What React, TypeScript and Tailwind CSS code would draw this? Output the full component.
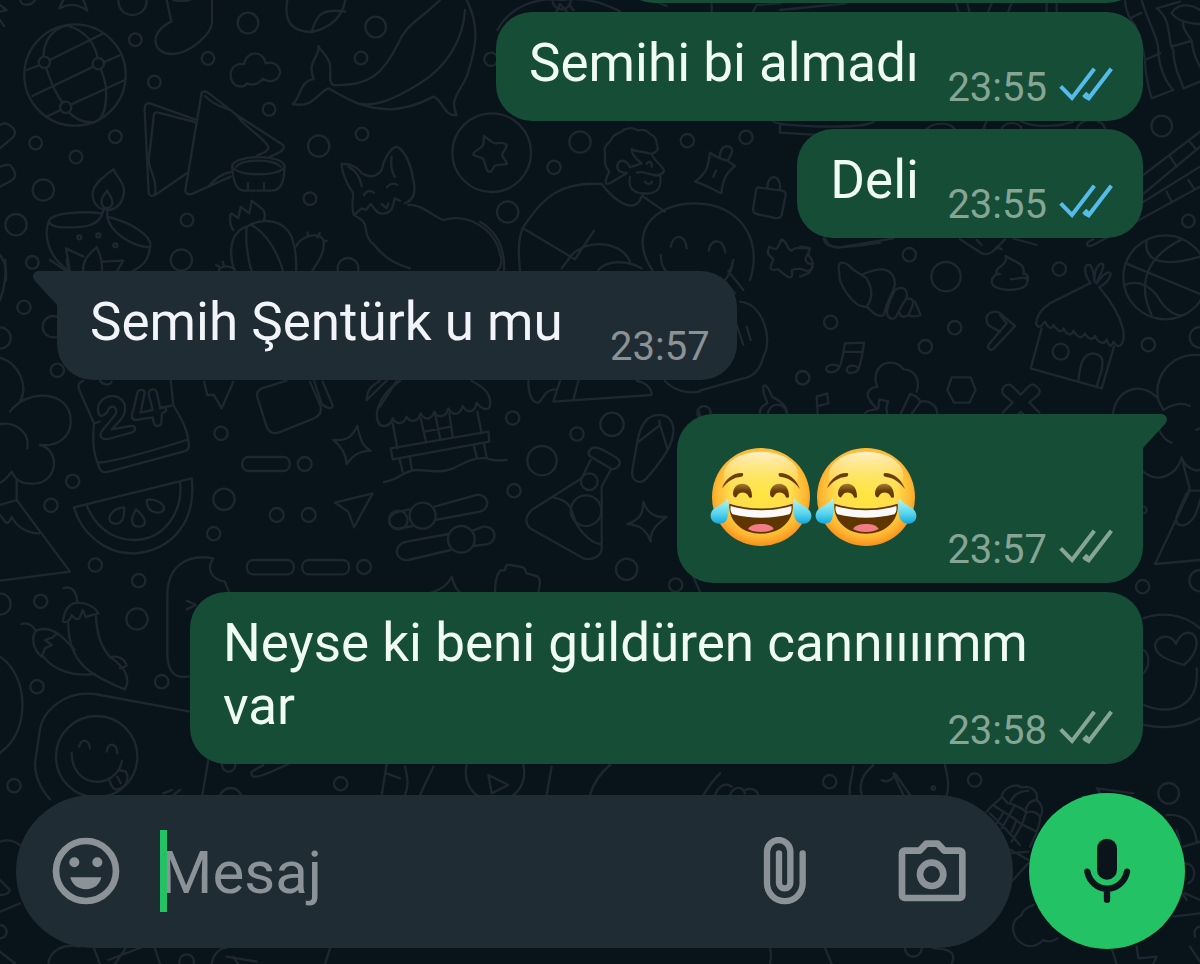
import React, { useState } from "react";

interface Message {
  id: number;
  text?: string;
  emojis?: number;
  time: string;
  mine: boolean;
  read?: boolean;
  tail?: boolean;
  space: string;
}

const messages: Message[] = [
  { id: 1, text: "Semihi bi almadı", time: "23:55", mine: true, read: true, space: "mt-[9px]" },
  { id: 2, text: "Deli", time: "23:55", mine: true, read: true, space: "mt-2" },
  { id: 3, text: "Semih Şentürk u mu", time: "23:57", mine: false, tail: true, space: "mt-[33px]" },
  { id: 4, emojis: 2, time: "23:57", mine: true, tail: true, space: "mt-[34px]" },
  { id: 5, text: "Neyse ki beni güldüren cannıııımm var", time: "23:58", mine: true, space: "mt-[9px]" },
];

// [cx, cy, r] in the coordinates of the tile they belong to
type Dot = [number, number, number];

interface Tile {
  at: string;
  dots: Dot[];
  lines: string[];
}

// wallpaper doodles, every tile is drawn at three times its size
const tiles: Tile[] = [
  {
    at: "translate(0 0) scale(0.33333)",
    dots: [
      [225, 225, 152], [133, 187, 17], [295, 191, 17], [197, 322, 17],
      [406, 119, 19], [624, 175, 19], [463, 246, 19], [744, 69, 31], [1127, 81, 31],
      [1083, 174, 19], [807, 328, 19], [956, 438, 32], [1086, 402, 19], [107, 429, 19],
      [346, 410, 19], [228, 471, 19], [130, 570, 32], [48, 674, 32], [97, 787, 19],
      [561, 660, 19], [544, 780, 32], [930, 596, 19], [1044, 805, 31],
      [238, 712, 6], [295, 706, 6], [346, 736, 6],
    ],
    lines: [
      "M80 210L117 196M149 180L310 100M97 288L280 200M310 187L362 165M140 350L182 330M212 314L375 240",
      "M130 170C132 130 150 90 200 76C255 90 285 130 293 175M138 203C150 240 165 280 188 308M207 337C230 360 255 370 285 366C320 350 320 290 318 262C314 240 308 220 302 207",
      "M60 0C65 18 90 20 105 0M190 0L178 25C205 10 235 12 262 32L250 0M0 15L20 30L0 35M0 60L12 78",
      "M355 0C355 60 440 60 440 0M500 0L514 65C440 100 460 165 520 162C570 160 638 100 636 65V0M520 0C540 4 555 4 570 0",
      "M862 0C850 70 880 95 935 96C985 85 1025 60 1036 0M935 96C950 40 970 25 1036 35",
      "M732 192C740 150 790 150 797 190C830 180 845 210 838 225C828 250 800 245 788 236C770 258 750 255 742 250C725 268 690 260 692 220C695 200 710 190 732 192Z",
      "M1320 0C1260 60 1220 70 1195 130C1150 220 1110 260 1000 255C980 245 1000 200 985 180C975 160 960 150 955 138C960 165 930 185 935 210C935 230 945 235 940 238C900 240 900 300 878 312C940 325 950 280 985 265C1040 295 1080 325 1170 328C1240 325 1280 300 1300 290C1330 300 1330 350 1370 345C1350 300 1370 290 1400 230C1430 140 1440 80 1400 0M1080 312C1130 318 1180 300 1260 250C1340 200 1390 120 1395 30",
      "M585 358L450 310C436 308 434 318 434 330L446 580C450 590 458 590 470 582L560 520M585 366L475 338C462 334 460 345 460 360L446 480C450 520 470 530 466 580",
      "M605 278L556 570C556 582 566 586 580 580L625 560L692 530M605 278C615 268 625 280 635 286L710 345L845 432C856 440 852 448 840 456L810 470M615 288C640 315 670 322 690 330M710 345C730 380 790 410 805 440C808 452 790 460 772 466M625 560C650 530 670 520 692 516",
      "M696 498C700 465 845 460 854 498C850 530 705 532 696 498ZM696 498C700 540 705 572 735 572H815C845 570 852 545 854 498M708 500C730 476 820 476 842 500M744 550V565M792 550V565",
      "M340 508C310 530 276 555 278 585C280 615 300 630 322 630C350 630 372 605 372 570C370 545 350 530 340 508ZM322 572C305 590 300 605 308 618C315 628 330 625 336 615C342 600 330 590 322 572Z",
      "M310 632C300 680 250 684 190 682C155 680 145 670 148 660C160 640 240 632 305 640M148 660C130 700 140 770 210 815M322 650C330 700 400 740 450 742C460 710 400 670 322 650ZM450 742C445 790 420 800 395 815M322 632V655",
      "M210 815L198 745L250 770M250 815C245 780 270 760 290 742C305 770 308 800 305 815M308 785L370 782L350 815",
      "M740 680C680 700 690 780 705 815M740 680C735 730 745 780 755 815M755 675C800 700 830 750 850 815M740 680C790 650 850 660 875 710C888 750 890 790 888 815M700 690C685 670 690 640 695 640L715 655L722 620L748 640L755 602L790 630C800 650 790 665 785 665",
      "M888 740C900 705 970 690 972 730C970 770 950 790 935 815M925 710L922 697M952 712L960 698M970 725L980 722M705 810C690 795 660 795 655 815M648 795L658 800M668 785L672 798",
      "M1060 580C1035 545 1025 510 1025 492C1060 490 1080 510 1085 520C1110 535 1130 530 1145 510C1150 480 1170 445 1190 440C1215 450 1235 500 1240 540C1250 580 1240 600 1215 610M1085 558C1080 530 1065 510 1045 500M1175 470C1170 500 1178 520 1184 530M1060 580C1055 620 1060 640 1062 645L1085 625L1098 630L1112 612L1128 632C1140 645 1170 645 1178 620L1184 595L1200 602M1092 585C1098 572 1115 570 1122 578M1160 562C1168 550 1185 548 1192 555M1145 612L1160 625L1165 610",
      "M1062 645C1085 660 1095 660 1098 690C1100 710 1105 720 1120 732C1150 770 1180 790 1230 805M1225 615C1260 610 1300 650 1330 660C1400 640 1480 680 1500 760C1510 790 1500 805 1490 815",
      "M0 375C15 365 25 370 40 385C48 395 45 410 35 415L0 445M0 500C25 490 35 490 45 520C48 535 40 540 0 560M0 765C15 785 20 810 18 840",
    ],
  },
  {
    at: "translate(480 0) scale(0.33333)",
    dots: [
      [35, 458, 118], [300, 426, 32], [222, 502, 20], [622, 422, 20], [798, 412, 20],
      [83, 636, 32], [33, 178, 20], [245, 0, 28],
    ],
    lines: [
      "M52 90C90 20 170 -10 245 0C320 -10 370 10 420 34M230 34L240 12L260 34M280 30L268 14",
      "M12 408C30 420 40 432 48 430C60 428 75 428 80 435C78 450 66 458 66 465C72 480 85 488 80 492C65 495 48 492 42 500C36 515 30 520 22 512C15 500 14 480 8 475L-20 465C-25 455 5 445 10 435Z",
      "M388 515C365 490 380 470 374 455C370 430 395 430 398 410C415 395 425 400 430 390C450 380 465 385 475 392C490 385 505 395 510 402C530 410 530 425 530 432C540 450 525 458 515 462C490 455 470 455 455 448C455 470 475 480 485 490L450 502C440 480 420 475 412 495C410 510 420 520 440 518",
      "M388 515C375 540 370 560 392 548L440 520M365 552C400 600 440 620 460 616C485 610 480 590 490 582M450 530C440 580 480 582 510 580C540 575 545 555 540 525C515 530 490 510 470 518M515 462C520 480 555 505 552 512C550 522 530 528 520 526M495 545C500 555 515 552 516 545M500 492C505 480 518 485 515 500",
      "M365 552C240 545 190 590 128 684L285 778L342 692M128 684C110 730 118 780 120 815M490 590L555 635M245 805L275 765C330 710 430 730 450 785M355 810C380 780 440 780 485 805",
      "M520 815C440 700 520 610 645 610C780 610 850 720 810 840M572 740C580 700 615 700 620 745M686 752C692 712 732 715 736 758M542 765C545 790 545 800 560 815M760 780C758 800 750 810 745 815M0 665C60 700 75 760 72 815",
      "M720 470C720 440 740 432 755 445C762 455 745 475 745 480M690 458C715 475 725 478 742 482L765 498C740 520 730 530 724 580C700 570 680 555 645 545C680 520 685 500 690 458ZM708 512L700 530",
      "M834 562L905 572C918 575 918 580 916 590L905 645C900 655 895 655 885 654L830 642C820 640 818 632 820 622L828 572C830 565 830 562 834 562ZM862 562C862 520 905 520 900 570",
      "M905 718C890 745 895 755 868 740C855 770 875 765 880 780C865 810 870 812 895 808M905 718C925 725 915 745 935 752C945 740 960 745 990 745C985 770 965 775 985 790C1005 790 1000 815 975 812C970 805 950 805 935 810C940 840 930 840 895 808",
      "M880 365C890 380 1170 390 1185 362M900 375L900 398L1100 410M1030 715C1040 745 1060 750 1200 728M540 10L560 18M695 10V34M820 34L830 15L900 10M900 30L1100 10",
    ],
  },
  {
    at: "translate(800 0) scale(0.33333)",
    dots: [
      [1085, 378, 31], [1165, 663, 19], [328, 764, 20], [438, 830, 44], [778, 807, 20],
      [1096, 832, 126], [92, 967, 20], [464, 983, 20], [376, 1040, 20], [1045, 1034, 20],
      [8, 1133, 20], [1200, 1012, 31], [782, 1055, 24],
    ],
    lines: [
      "M975 0C975 30 990 60 1005 75C1020 120 1030 140 1035 180M990 55L1025 38M1025 0C1040 60 1080 120 1075 160C1080 210 1100 250 1120 270L1055 295C1040 250 1035 200 1035 180L1080 160M1070 25C1120 60 1100 130 1120 150C1120 210 1145 240 1150 265L1200 245M1070 25L1140 5M1115 40C1130 10 1170 10 1200 30M1115 40C1130 60 1160 70 1200 72M1150 65C1145 90 1170 110 1175 122M1115 140L1175 122C1180 170 1195 190 1200 200",
      "M380 388C400 365 450 365 465 388M550 388L560 362M605 388C610 365 660 362 665 388M660 362C700 385 780 380 820 365M830 388C840 350 910 350 915 388M465 0L475 34M500 0L508 34M565 34L575 10M625 34L635 8M740 10V34M770 10V34",
      "M1200 395L1030 525M1200 440L1020 590M1165 420L1190 450M1110 470L1130 500M1200 500L1015 615M1200 560L880 735C860 745 850 730 880 718M1100 575L1115 605M1165 540L1182 565",
      "M118 820C110 780 130 785 145 795C160 815 180 818 200 835C220 870 215 900 200 920C160 925 115 850 118 820ZM190 822C240 800 280 800 285 850C285 870 260 900 252 945C225 955 215 930 200 920M285 870C310 855 325 870 320 895C300 920 290 955 282 955C265 960 258 940 262 930C265 905 275 890 285 870M320 895C345 895 345 905 325 945C310 955 300 950 300 940M345 905L362 945C350 950 335 950 325 945",
      "M617 768C625 800 580 800 590 822C560 845 580 865 610 868C640 872 680 868 682 845C682 825 665 835 632 838M682 845C690 825 675 820 670 822C680 790 640 785 617 768M590 822H600",
      "M872 850C850 820 850 790 870 795C885 810 880 840 884 846M884 846C880 810 900 780 910 795C912 810 895 830 890 850C910 820 930 810 932 822C930 840 910 855 898 862",
      "M870 850L750 910C720 930 710 950 708 970C715 990 728 975 735 965C745 985 755 990 760 975C775 995 785 1000 790 985C800 1005 815 1010 820 992C835 1015 845 1018 855 1000C865 1020 880 1020 885 1008C895 1030 915 1035 920 1018C930 1045 935 1040 940 1025C955 1050 975 1040 970 990C960 950 930 900 898 862M725 985L692 1105L905 1165L942 1040M835 1145C840 1090 850 1060 880 1060C915 1065 908 1090 905 1110L890 1160",
      "M978 790L1200 882M1040 722C1030 790 1100 800 1200 770M1145 718C1040 770 1010 850 1055 945M975 855C1010 840 1040 850 1070 885C1100 940 1140 955 1160 940",
      "M135 1030L192 1028C188 1060 182 1090 175 1108M135 1030C130 1060 125 1090 118 1102M130 1055L188 1056M118 1102C110 1120 82 1120 78 1108C80 1095 100 1088 118 1100M175 1108C165 1122 142 1122 140 1110C142 1095 165 1092 175 1105",
      "M560 962C555 935 590 930 600 940L645 978L582 1045C575 1055 560 1045 565 1035L620 970L600 945M560 962C560 980 585 985 600 995",
      "M455 1132H512L527 1170L508 1208H462L442 1170Z",
      "M232 1160C215 1120 240 1085 275 1088C295 1090 305 1100 310 1108C350 1110 360 1145 350 1175M232 1160C200 1165 195 1190 215 1205M1200 1065C1110 1060 1060 1130 1075 1200C1085 1220 1090 1230 1090 1228M938 1245C950 1165 1020 1145 1068 1190",
      "M0 740C30 740 30 745 25 765C40 780 45 800 25 820L0 830M75 715C85 740 100 745 120 742L280 715M480 718L545 760C570 768 580 755 615 718M530 720L545 735M590 740L605 748M640 715L710 735",
    ],
  },
  {
    at: "translate(700 230) scale(0.33333)",
    dots: [[308, 443, 20], [12, 548, 20], [232, 552, 28]],
    lines: [
      "M97 97C97 120 88 132 75 150M90 130L130 180M75 155L105 190M120 215C190 220 220 330 190 380C180 420 160 440 130 445L0 482M110 285L130 345M140 290L152 330",
      "M190 470C196 460 206 472 216 500C240 512 262 530 262 552M190 470C186 490 200 508 202 520C184 528 178 540 180 552",
      "M353 552L350 500L382 490L385 520L355 528",
      "M510 515L530 535M495 552C500 535 520 545 535 535L538 508L565 514C555 530 560 540 562 552M602 552L630 492C645 495 658 505 660 515M635 552L662 515C690 508 712 530 712 552",
      "M912 495C905 488 905 480 912 470C920 462 932 462 938 470L962 494L988 468C996 460 1004 464 1010 470C1020 478 1022 486 1015 494L988 517L1018 548M912 495L938 517L908 548M955 552L963 546L970 552",
    ],
  },
  {
    at: "translate(0 260) scale(0.33333)",
    dots: [
      [72, 142, 20], [172, 331, 20], [0, 234, 32], [663, 520, 20], [914, 612, 21],
      [672, 718, 32], [641, 821, 20], [830, 765, 21], [926, 765, 21], [1092, 921, 21],
      [218, 664, 20], [153, 736, 20], [286, 915, 20], [416, 962, 20], [1195, 780, 28],
      [160, 200, 32],
    ],
    lines: [
      "M0 293C60 310 85 380 60 425M30 455C80 385 210 390 212 480C215 540 160 560 120 555C180 570 175 660 110 670C70 675 45 660 35 635C20 655 10 665 0 668M0 492C50 485 90 520 82 565M50 660V720L0 735M50 720L210 935L0 962M0 765L18 788C25 790 30 785 35 770C50 800 80 820 118 820",
      "M250 362C230 370 235 385 240 395L282 490C275 560 285 590 295 615C300 635 310 640 330 634L550 575C570 570 568 560 565 540C560 500 540 470 520 435L512 362M282 490L300 485M480 445L520 435M295 608C350 605 480 565 560 540M300 362C310 375 330 378 335 365",
      "M296 462C285 420 325 400 355 412C385 428 378 462 358 484L335 508L392 498C408 496 410 512 396 517L325 537C300 540 296 525 308 510L345 465C358 445 335 430 325 448C322 462 302 475 296 462Z",
      "M412 398C416 386 434 388 434 398L422 458L458 450L446 402C446 386 466 384 470 396L480 442C502 438 504 454 486 460L484 488C482 502 464 500 462 490L458 472L408 480C392 480 394 466 400 450Z",
      "M612 365L622 405H642L665 445L700 365M785 385L860 362M785 385C770 395 770 400 772 412L800 500C808 518 820 522 835 518L935 478C960 470 965 455 962 440L930 365M942 362L965 430C975 445 1000 450 998 435L968 365",
      "M746 591H850C876 591 876 633 850 633H746C720 633 720 591 746 591ZM760 900H862C888 900 888 943 862 943H760C734 943 734 900 760 900ZM926 900H1028C1054 900 1054 943 1028 943H926C900 943 900 900 926 900Z",
      "M1072 498C1082 545 1090 560 1112 572C1070 575 1055 590 1040 612C1038 580 1020 555 1000 540C1050 545 1060 520 1072 498ZM1118 700L1062 802L1045 755L1005 728Z",
      "M222 742L575 655C590 780 520 870 405 880C310 885 240 810 222 742ZM260 735C280 790 330 840 400 840C490 840 550 760 540 665",
      "M372 742C330 745 320 780 335 788C360 800 375 780 372 742ZM408 748C392 775 390 798 415 800C440 800 445 780 408 748ZM440 720C455 715 490 725 492 745C490 765 440 765 440 720Z",
      "M640 895C560 880 500 920 502 1010V1190C505 1230 520 1255 560 1250H640M640 895C615 930 640 960 675 965C680 985 690 995 690 1005M560 1022L588 1035L560 1048",
      "M1100 420C1100 380 1130 370 1140 362M1100 420L1160 362M1200 362C1130 410 1120 470 1140 495C1160 505 1175 485 1180 480M200 0C202 20 205 30 210 34M150 0L200 34M0 120C15 80 18 50 16 0",
    ],
  },
  {
    at: "translate(380 370) scale(0.33333)",
    dots: [
      [398, 144, 20], [591, 192, 20], [696, 163, 35], [486, 272, 44], [402, 362, 20],
      [628, 335, 25], [618, 422, 46], [740, 598, 32], [887, 645, 20], [128, 437, 39],
      [244, 508, 40],
    ],
    lines: [
      "M0 165C20 175 35 160 38 145C50 165 70 165 80 140C90 160 115 155 122 130C135 155 155 148 163 125C175 148 200 140 205 115C220 140 240 135 248 108C265 135 285 125 290 98C310 125 330 120 330 105C335 75 310 50 275 33M0 110L50 33",
      "M38 160L52 235M122 145L138 215M165 130L180 205M208 130L218 200M135 185L212 170M292 125L305 190M32 235L325 185L328 215L38 268ZM58 265L68 305M90 262L95 298M282 228L290 262M312 222L320 262M12 336C60 330 70 300 110 300C160 302 180 310 220 295C260 275 280 262 320 265C345 275 360 272 380 270",
      "M92 418L60 424C10 435 25 480 60 475L98 468M164 410L290 375C325 370 335 415 300 425L166 450M206 492L80 515C35 525 45 575 85 570L212 540M278 482L310 470C350 468 355 515 320 523L280 528",
      "M630 240C640 225 660 232 712 265C730 280 710 300 695 297L635 262C622 255 625 245 630 240ZM632 270L605 325L455 420C435 440 435 460 450 475L610 565C635 572 665 560 665 535V350L692 300M520 382C600 400 560 440 610 490C630 512 650 522 662 522",
      "M870 225C890 180 880 140 845 135C800 130 780 170 772 215L757 300C752 335 780 345 800 325C830 290 855 260 870 225ZM776 215L840 165L862 235M840 165L838 152",
      "M790 395C800 430 830 445 860 440C830 465 810 480 812 515C800 480 780 465 742 462C780 450 790 430 790 395ZM215 620C205 645 180 660 155 667M215 620C222 645 230 660 240 667M345 667C345 640 350 615 360 602L375 600C378 580 385 585 392 585L430 592C440 600 435 608 440 610L470 618C482 625 482 635 475 667",
      "M445 33C445 70 455 98 475 98C490 90 490 60 525 58M540 33L520 95L815 75C815 50 790 35 770 33M595 33L580 90M855 33C880 60 920 72 960 65M955 120L965 150M940 620L960 665",
    ],
  },
  {
    at: "translate(0 560) scale(0.33333)",
    dots: [
      [0, 132, 32], [122, 124, 20], [411, 177, 32], [111, 380, 20], [485, 365, 20],
      [42, 677, 20], [1022, 671, 20], [290, 590, 122], [692, 718, 34], [686, 615, 20],
    ],
    lines: [
      "M190 85C215 75 230 95 232 128M232 128C205 130 195 150 188 185C200 190 212 180 215 165C225 180 235 180 240 172L248 150L258 172C270 165 280 165 295 160C285 140 260 128 232 128M205 190C205 310 270 345 375 388C395 350 370 320 330 290C300 260 290 210 288 170",
      "M65 192C85 185 100 200 108 212M108 212C95 230 95 265 125 290L135 265L155 255L135 240L150 235C165 235 160 220 175 222C150 205 125 205 108 212M130 290C160 330 220 350 285 342M165 215C190 230 205 250 225 270M330 292C350 285 375 295 380 318L360 325",
      "M0 290C90 350 90 520 0 578M570 455L300 405C200 385 125 450 118 520L105 610C105 650 125 690 150 718M625 600L605 718M237 560C245 535 265 535 270 565M320 575C325 545 350 548 352 580M215 578C215 690 350 690 366 602M328 660C335 685 345 690 352 688C375 685 390 660 378 635L355 630M352 650L362 670M490 700L515 690M520 705L540 690",
      "M755 635C750 660 775 655 865 612M755 635L790 615M1160 612L1145 705M1160 640L1200 655",
    ],
  },
  {
    at: "translate(0 780) scale(0.33333)",
    dots: [[0, 455, 20], [560, 545, 22]],
    lines: [
      "M0 185C30 175 50 185 65 200M0 300L30 330C25 345 10 345 0 345M0 395L60 370M0 515L45 550M145 552C150 510 190 490 240 500M280 500L300 552M325 540L430 500M380 500L345 552M465 505L480 552M635 552C640 520 660 505 680 503M680 530L770 545M715 552L700 530M990 505L975 552",
      "M1215 -40C1225 0 1225 20 1215 45M1260 45L1300 -40M1400 -45C1390 0 1410 30 1430 45M1465 -15L1525 15L1475 40ZM1570 -45C1580 0 1560 30 1540 45M1640 45L1655 -40M1770 45C1780 10 1800 -20 1830 -45",
    ],
  },
  {
    at: "translate(700 780) scale(0.33333)",
    dots: [[389, 5, 20], [824, 0, 20], [1406, 40, 31], [700, 24, 5], [640, 505, 25]],
    lines: [
      "M10 45C25 20 40 0 60 -20M45 45C55 20 75 5 95 20M90 45C100 20 125 15 135 40M135 30C155 22 170 30 175 45M450 45C445 20 455 0 460 -40M485 45C475 10 490 -20 520 -45M545 0C560 10 580 0 585 -20L630 45M610 45L580 -20M740 45C748 20 745 0 735 -45",
      "M860 95C880 70 900 60 905 50C910 20 950 10 965 22C1000 15 1015 40 1010 60C1030 75 1030 100 1020 110C1020 140 1005 170 990 200M905 50C920 60 920 75 930 70C950 80 975 85 978 100L965 135L935 185M930 70C935 50 950 35 985 32M978 100C975 75 990 62 1010 60M978 100C990 90 1010 95 1020 110M880 75C900 90 945 115 960 130L1010 155M870 100L920 150L960 195M905 145L925 110L945 75M890 130L912 95M935 155L950 120",
      "M915 200L985 240M930 220L985 215M985 250L930 310M1190 25L1300 40M1190 25L1205 45M1400 105C1450 100 1485 130 1490 185M1430 150L1440 185M1500 185L1450 200M1455 250C1490 250 1490 300 1465 310M1455 340L1500 360M1420 410L1500 400M1440 330L1460 360",
      "M1000 375C960 390 965 410 965 405C920 430 940 480 975 495C1000 505 1020 490 1030 480C1050 490 1065 480 1072 475M210 505C215 520 212 540 210 552M375 505L395 552M700 505C750 505 770 520 755 552M1235 505L1250 552M1310 500L1315 535L1370 530L1360 552M1470 500L1500 545M1485 470C1480 450 1490 440 1500 440",
    ],
  },
  {
    at: "translate(1000 380) scale(0.33333)",
    dots: [[428, 620, 20], [600, 602, 32], [38, 550, 20], [430, 390, 10]],
    lines: [
      "M490 90C530 65 555 70 570 78M470 110C470 150 490 180 515 188M600 145L588 150M430 275C470 310 530 290 545 232C555 260 580 275 600 270M545 232L570 330L465 552L600 540M565 332H600M535 395C515 440 550 445 570 425C590 410 595 380 600 360M560 340L535 395",
      "M430 715C480 695 550 700 600 745M385 1015C440 1050 540 1050 600 1015M420 970C500 1010 600 990 590 865M430 810C450 820 450 860 430 880M552 855C500 840 465 825 465 795C470 765 515 760 528 792C540 750 590 745 590 790C588 820 570 840 552 855Z",
      "M355 545C370 555 372 570 370 580M120 572L145 548M195 572L225 548M270 550L305 572M150 1032C165 1042 185 1042 205 1032",
    ],
  },
];

const Wallpaper = () => (
  <svg
    className="absolute inset-0 h-full w-full"
    viewBox="0 0 1200 964"
    preserveAspectRatio="xMidYMid slice"
    fill="none"
    stroke="#1e2730"
    strokeWidth="7"
    strokeLinecap="round"
    strokeLinejoin="round"
    aria-hidden="true"
  >
    {tiles.map((tile) => (
      <g key={tile.at} transform={tile.at}>
        {tile.dots.map(([cx, cy, r], i) => (
          <circle key={i} cx={cx} cy={cy} r={r} />
        ))}
        {tile.lines.map((d, i) => (
          <path key={i} d={d} />
        ))}
      </g>
    ))}
  </svg>
);

const Ticks = ({ read }: { read?: boolean }) => (
  <svg
    className={`mb-2 h-[34px] w-[54px] ${read ? "text-[#55bbe8]" : "text-[#86a595]"}`}
    viewBox="779 197 162 102"
    fill="none"
    stroke="currentColor"
    strokeWidth="12"
    role="img"
    aria-label={read ? "Okundu" : "İletildi"}
  >
    <path d="M784 255L818 290L885 202" />
    <path d="M855 284L868 291L936 202M853 288L865 275" />
  </svg>
);

const JoyEmoji = () => (
  <svg className="h-[102px] w-[105px]" viewBox="60 49 315 306" role="img" aria-label="😂">
    <defs>
      <radialGradient id="face" cx="0.5" cy="0.45" r="0.56">
        <stop offset="0" stopColor="#ffe640" />
        <stop offset="0.55" stopColor="#fedc4c" />
        <stop offset="0.82" stopColor="#fdb732" />
        <stop offset="1" stopColor="#f78c1a" />
      </radialGradient>
      <linearGradient id="shine" x1="0" y1="0" x2="0" y2="1">
        <stop offset="0" stopColor="#fff0c8" />
        <stop offset="1" stopColor="#ffe54d" stopOpacity="0" />
      </linearGradient>
      <linearGradient id="tear" x1="0" y1="0" x2="0" y2="1">
        <stop offset="0" stopColor="#b8f6f4" />
        <stop offset="0.6" stopColor="#58d5ee" />
        <stop offset="1" stopColor="#16a6da" />
      </linearGradient>
      <linearGradient id="eye" x1="0" y1="0" x2="0" y2="1">
        <stop offset="0" stopColor="#a87c3a" />
        <stop offset="0.5" stopColor="#6b3f05" />
        <stop offset="1" stopColor="#5c3300" />
      </linearGradient>
    </defs>
    <circle cx="213" cy="202" r="147" fill="url(#face)" />
    <ellipse cx="213" cy="136" rx="112" ry="70" fill="url(#shine)" />
    <path d="M96 176C106 148 130 129 156 130C162 131 160 140 154 141C130 143 113 155 96 176Z" fill="#6a3e05" />
    <path d="M330 178C320 150 296 130 270 130C264 131 264 139 270 141C294 143 313 157 330 178Z" fill="#6a3e05" />
    <path d="M129 194C128 176 140 162 157 162C175 162 187 177 186 203C180 206 176 203 175 198C168 186 148 184 141 199C138 206 131 204 129 194Z" fill="url(#eye)" />
    <path d="M240 194C239 176 251 162 268 162C286 162 298 177 297 203C291 206 287 203 286 198C279 186 259 184 252 199C249 206 242 204 240 194Z" fill="url(#eye)" />
    <path d="M118 222C175 241 252 241 308 222C313 272 272 312 213 312C154 312 114 272 118 222Z" fill="#5f3600" />
    <path d="M122 229C178 246 248 246 304 229C306 242 303 250 298 254C245 268 180 268 128 254C123 250 120 242 122 229Z" fill="#fbf9f8" />
    <path d="M174 298C180 286 198 283 213 283C230 283 246 287 251 298C241 304 228 307 213 307C197 307 184 304 174 298Z" fill="#f17c86" />
    <path d="M114 206C118 228 116 262 108 274C98 286 74 284 66 272C56 256 65 239 80 232C94 225 106 217 114 206Z" fill="url(#tear)" />
    <path d="M312 206C308 228 309 258 317 270C327 286 352 286 361 271C369 256 361 240 346 232C332 225 320 217 312 206Z" fill="url(#tear)" />
  </svg>
);

const Tail = ({ mine }: { mine: boolean }) =>
  mine ? (
    <svg className="absolute top-0 left-full h-[34px] w-6 text-[#154d37]" viewBox="0 0 24 34" aria-hidden="true">
      <path d="M-1 0H18C23 0 26 5 22 10L0 34H-1Z" fill="currentColor" />
    </svg>
  ) : (
    <svg className="absolute top-0 right-full h-[34px] w-6 text-[#202c33]" viewBox="0 0 24 34" aria-hidden="true">
      <path d="M25 0H6C1 0 -2 5 2 10L24 34H25Z" fill="currentColor" />
    </svg>
  );

const Bubble = ({ message }: { message: Message }) => {
  const { text, emojis, time, mine, read, tail, space } = message;

  return (
    <li
      className={`relative max-w-[953px] shrink-0 rounded-[36px] pl-[33px] ${space} ${
        mine ? "self-end bg-[#154d37] pr-[30px]" : "self-start bg-[#202c33] pr-7"
      } ${tail ? (mine ? "rounded-tr-none" : "rounded-tl-none") : ""} ${
        emojis ? "pt-8 pb-[35px]" : "pt-5 pb-[26px]"
      }`}
    >
      {tail && <Tail mine={mine} />}
      {emojis ? (
        <div className="flex">
          {Array.from({ length: emojis }, (_, i) => (
            <JoyEmoji key={i} />
          ))}
          <span className="w-[193px]"></span>
        </div>
      ) : (
        <p className={`text-[53px] leading-[63px] ${mine ? "text-[#f1fbf6]" : "text-[#f1f5f9]"}`}>
          {text}
          {/* keeps the last line clear of the time */}
          <span className={`inline-block ${mine ? "w-[194px]" : "w-[146px]"}`}></span>
        </p>
      )}
      <div
        className={`absolute bottom-[9px] flex items-center gap-3 text-[40px] leading-[48px] ${
          mine ? "right-[30px] text-[#86a595]" : "right-[27px] text-[#8a9297]"
        }`}
      >
        <time>{time}</time>
        {mine && <Ticks read={read} />}
      </div>
    </li>
  );
};

const Composer = () => {
  const [value, setValue] = useState("");

  return (
    <form
      className="relative mt-[29px] flex shrink-0 items-center gap-4 pr-[15px] pb-[15px] pl-4"
      onSubmit={(e) => e.preventDefault()}
    >
      <div className="flex h-[153px] min-w-0 flex-1 items-center rounded-full bg-[#202c33] pr-[47px] pl-9 text-[#8b9398]">
        <button type="button" aria-label="Emoji" className="shrink-0">
          <svg className="size-[68px]" viewBox="158 173 204 204" fill="currentColor">
            <circle cx="260" cy="275" r="90" fill="none" stroke="currentColor" strokeWidth="20" />
            <circle cx="225" cy="249" r="15" />
            <circle cx="294" cy="249" r="15" />
            <path d="M213 294H306C302 315 284 330 260 330C236 330 217 315 213 294Z" />
          </svg>
        </button>
        <div className="relative ml-10 min-w-0 flex-1">
          <input
            type="text"
            aria-label="Mesaj"
            placeholder="Mesaj"
            value={value}
            onChange={(e) => setValue(e.target.value)}
            className="block h-[82px] w-full bg-transparent pt-1 text-[60px] caret-[#23c265] outline-none placeholder:text-[#8b9398]"
          />
          {!value && <span className="absolute top-0 left-0 h-[82px] w-[7px] bg-[#23c265]"></span>}
        </div>
        <button type="button" aria-label="Dosya ekle" className="shrink-0">
          <svg className="h-[68px] w-11" viewBox="189 173 132 204" fill="none" stroke="currentColor" strokeWidth="19" strokeLinecap="round">
            <path d="M308 222V312a53 53 0 0 1-107 0V217a35 35 0 0 1 70 0V310a17 17 0 0 1-34 0V222" />
          </svg>
        </button>
        <button type="button" aria-label="Kamera" className="ml-[91px] shrink-0">
          <svg className="size-[68px]" viewBox="595 173 204 204" fill="none" stroke="currentColor" strokeWidth="20" strokeLinejoin="round">
            <path d="M607 222a8 8 0 0 1 8-8h45l20-21h34l20 21h46a8 8 0 0 1 8 8v126a8 8 0 0 1-8 8H615a8 8 0 0 1-8-8Z" />
            <circle cx="696" cy="285" r="35" />
          </svg>
        </button>
      </div>
      <button
        type="button"
        aria-label="Sesli mesaj"
        className="flex size-[156px] shrink-0 items-center justify-center rounded-full bg-[#23c265] text-[#0a141a]"
      >
        <svg className="h-[66px] w-12" viewBox="1151 171 144 198" fill="none" stroke="currentColor" strokeWidth="19" strokeLinecap="round">
          <rect x="1193" y="173" width="60" height="123" rx="30" fill="currentColor" stroke="none" />
          <path d="M1164 272C1170 302 1194 323 1223 323C1253 323 1277 302 1283 272M1223 323V356" />
        </svg>
      </button>
    </form>
  );
};

const App: React.FC = () => {
  return (
    <main className="relative flex h-screen flex-col overflow-hidden bg-[#09131a] font-['Roboto',sans-serif]">
      <Wallpaper />
      <ul className="relative flex min-h-0 flex-1 flex-col justify-end overflow-hidden px-[57px]">
        <li className="h-[109px] w-[525px] shrink-0 self-end rounded-[36px] bg-[#154d37]"></li>
        {messages.map((message) => (
          <Bubble key={message.id} message={message} />
        ))}
      </ul>
      <Composer />
    </main>
  );
};

export default App;
